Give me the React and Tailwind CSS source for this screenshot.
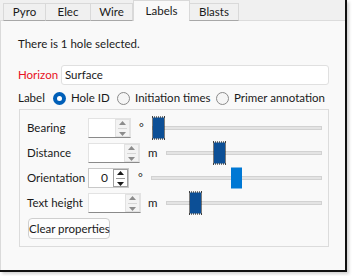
import React from 'react';

const TABS = [
  { label: 'Pyro', w: 'w-[43px]' },
  { label: 'Elec', w: 'w-[46px]' },
  { label: 'Wire', w: 'w-[43px]' },
  { label: 'Labels', w: 'w-[57px]', active: true },
  { label: 'Blasts', w: 'w-[50px]' },
];

const RADIOS = [
  { label: 'Hole ID', checked: true, w: 'w-[64px]' },
  { label: 'Initiation times', w: 'w-[99px]' },
  { label: 'Primer annotation', w: 'w-[110px]' },
];

const Arrows = ({ dark }) => (
  <div
    className={`w-[15px] h-full flex flex-col items-center justify-center gap-[3px] border ${
      dark ? 'border-[#a0a0a0] bg-white' : 'border-[#e2e2e2] bg-[#f3f3f3]'
    }`}
  >
    <svg width="7" height="4" viewBox="0 0 7 4">
      <path d="M0 4 L3.5 0 L7 4 Z" fill={dark ? '#1a1a1a' : '#8c8c8c'} />
    </svg>
    <div className={`w-[9px] h-px ${dark ? 'bg-[#9a9a9a]' : 'bg-[#d6d6d6]'}`} />
    <svg width="7" height="4" viewBox="0 0 7 4">
      <path d="M0 0 L7 0 L3.5 4 Z" fill={dark ? '#1a1a1a' : '#8c8c8c'} />
    </svg>
  </div>
);

const SpinBox = ({ width, value, focused }) => (
  <div
    className={`${width} h-[20px] flex bg-white border ${
      focused ? 'border-[#c8c8c8]' : 'border-[#e3e3e3] border-b-[#8a8a8a]'
    }`}
  >
    <div className="flex-1 flex items-center justify-end pr-[5px] text-[12px] text-[#1a1a1a]">{value}</div>
    <Arrows dark={focused} />
  </div>
);

const Slider = ({ trackMl, handleLeft, solid }) => (
  <div className={`relative flex-1 h-[20px] flex items-center ${trackMl}`}>
    <div className="w-full h-[4px] bg-[#e4e4e4] border border-[#d2d2d2]" />
    <div
      className={`absolute top-1/2 -translate-y-1/2 ${handleLeft} w-[11px] h-[21px] ${
        solid
          ? 'bg-[#0078d4]'
          : 'bg-[repeating-conic-gradient(#0a74da_0_25%,#0d2a52_0_50%)] bg-[length:2px_2px] outline outline-1 outline-dotted outline-black'
      }`}
    />
  </div>
);

const ROWS = [
  { label: 'Bearing', spin: 'w-[43px]', unit: '°', unitMl: 'ml-[8px]', trackMl: 'ml-[8px]', handle: 'left-[1px]' },
  { label: 'Distance', spin: 'w-[52px]', unit: 'm', unitMl: 'ml-[8px]', trackMl: 'ml-[9px]', handle: 'left-[48px]' },
  { label: 'Orientation', spin: 'w-[41px]', unit: '°', unitMl: 'ml-[9px]', trackMl: 'ml-[8px]', handle: 'left-[80px]', value: '0', focused: true, solid: true },
  { label: 'Text height', spin: 'w-[53px]', unit: 'm', unitMl: 'ml-[7px]', trackMl: 'ml-[9px]', handle: 'left-[24px]' },
];

const Radio = ({ checked }) =>
  checked ? (
    <div className="w-[13px] h-[13px] shrink-0 rounded-full bg-[#005fb8] flex items-center justify-center">
      <div className="w-[5px] h-[5px] rounded-full bg-white" />
    </div>
  ) : (
    <div className="w-[13px] h-[13px] shrink-0 rounded-full border border-[#8a8a8a] bg-[#f5f5f5]" />
  );

export default function App() {
  return (
    <div className="w-[353px] h-[276px] bg-white font-['Lato',sans-serif] text-[11.5px] text-[#1a1a1a] leading-[16px] whitespace-nowrap">
      <div className="w-[347px] h-[272px] flex flex-col border-r-[2px] border-b-[2px] border-[#111] shadow-[2px_2px_3px_rgba(0,0,0,0.18)] bg-[#f0f0f0]">
        <div className="h-[21px] flex items-end pl-[3px] border-b border-[#dcdcdc] bg-[#f0f0f0]">
          {TABS.map((tab) =>
            tab.active ? (
              <div
                key={tab.label}
                className={`${tab.w} h-[21px] -mb-px bg-[#f9f9f9] border border-b-0 border-[#d9d9d9] flex items-center justify-center`}
              >
                {tab.label}
              </div>
            ) : (
              <div
                key={tab.label}
                className={`${tab.w} h-[18px] -mb-px bg-[#f0f0f0] border border-[#d9d9d9] border-b-[#a8a8a8] -ml-px first:ml-0 flex items-center justify-center`}
              >
                {tab.label}
              </div>
            )
          )}
        </div>

        <div className="flex-1 bg-[#f9f9f9] border-l border-[#dadada] pl-[17px] pr-[16px] pt-[15px]">
          <div>There is 1 hole selected.</div>

          <div className="mt-[13px] flex items-center h-[20px]">
            <span className="w-[43px] text-[#e81123]">Horizon</span>
            <div className="flex-1 h-[20px] bg-white border border-[#e0e0e0] rounded-[3px] flex items-center pl-[3px]">
              Surface
            </div>
          </div>

          <div className="mt-[5px] flex items-center h-[16px]">
            <span className="w-[35px]">Label</span>
            {RADIOS.map((r) => (
              <div key={r.label} className={`flex items-center ${r.w}`}>
                <Radio checked={r.checked} />
                <span className="ml-[5px]">{r.label}</span>
              </div>
            ))}
          </div>

          <div className="mt-[3px] ml-px h-[138px] border border-[#dcdcdc] pl-[7px] pr-[6px] pt-[8px]">
            <div className="flex flex-col gap-[5px]">
              {ROWS.map((row) => (
                <div key={row.label} className="flex items-center h-[20px]">
                  <span className="w-[61px]">{row.label}</span>
                  <SpinBox width={row.spin} value={row.value} focused={row.focused} />
                  <span className={row.unitMl}>{row.unit}</span>
                  <Slider trackMl={row.trackMl} handleLeft={row.handle} solid={row.solid} />
                </div>
              ))}
            </div>
            <button className="mt-[5px] ml-px h-[21px] w-[82px] bg-[#fdfdfd] border border-[#cfcfcf] rounded-[4px] leading-[16px]">
              Clear properties
            </button>
          </div>
        </div>
      </div>
    </div>
  );
}
